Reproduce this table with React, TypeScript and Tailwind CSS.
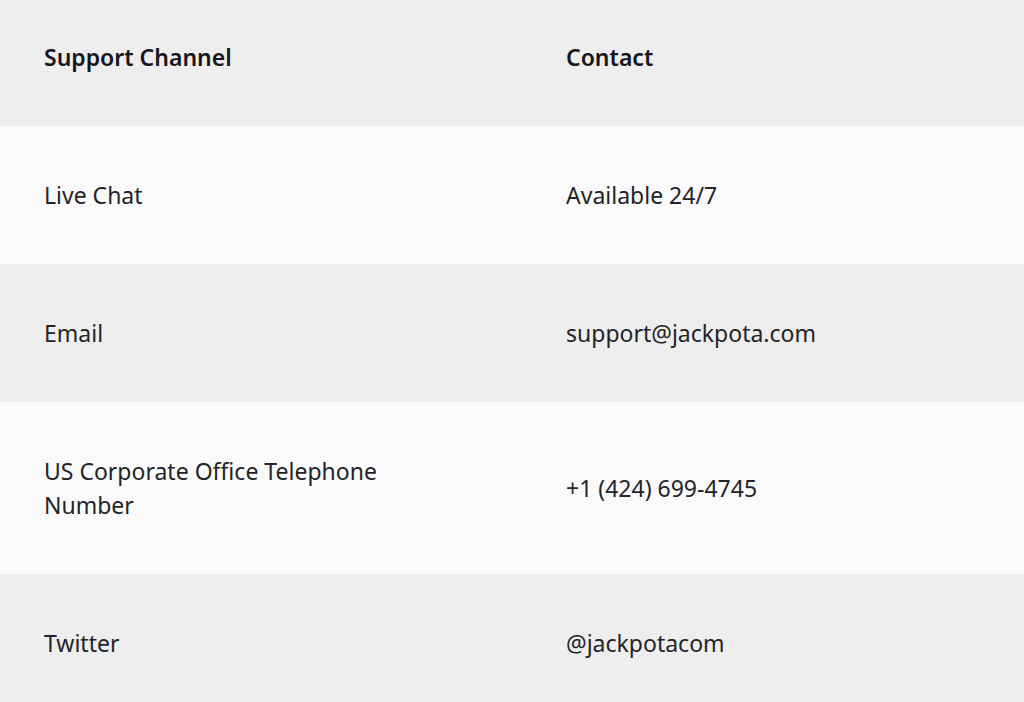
const rows = [
  { channel: 'Live Chat', contact: 'Available 24/7' },
  { channel: 'Email', contact: 'support@jackpota.com' },
  { channel: 'US Corporate Office Telephone Number', contact: '+1 (424) 699-4745' },
  { channel: 'Twitter', contact: '@jackpotacom' },
];

export default function App() {
  return (
    <div className="w-[1024px] h-[702px] overflow-hidden bg-[#fafafa] text-[23px] leading-[34px] text-[#242428]" style={{ fontFamily: '"Noto Sans", "Open Sans", sans-serif' }}>
      <table className="w-full border-collapse">
        <thead>
          <tr className="bg-[#eeeeee]">
            <th className="w-[566px] pl-[44px] pr-[110px] pt-[40px] pb-[52px] text-left font-semibold text-[#16161c]">Support Channel</th>
            <th className="pt-[40px] pb-[52px] text-left font-semibold text-[#16161c]">Contact</th>
          </tr>
        </thead>
        <tbody>
          {rows.map((r, i) => (
            <tr key={r.channel} className={i % 2 === 0 ? 'bg-[#fafafa]' : 'bg-[#eeeeee]'}>
              <td className="pl-[44px] pr-[110px] py-[52px] align-middle">{r.channel}</td>
              <td className="py-[52px] align-middle">{r.contact}</td>
            </tr>
          ))}
        </tbody>
      </table>
    </div>
  );
}
